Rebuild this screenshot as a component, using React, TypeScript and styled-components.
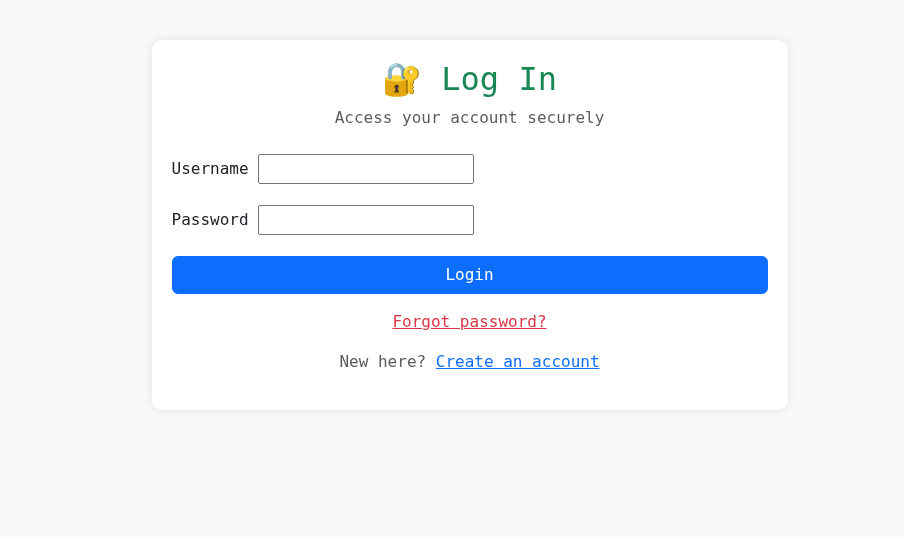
import React from "react";
import styled, { createGlobalStyle } from "styled-components";

const GlobalStyle = createGlobalStyle`
  *, *::before, *::after { box-sizing: border-box; }
  body {
    margin: 0;
    background: #f8f9fa;
    color: #212529;
    font: 400 16px/24px "DejaVu Sans Mono", monospace;
  }
`;

const Page = styled.div`
  min-height: 100vh;
  padding: 40px 0 0 151.5px;
  will-change: transform;
`;

const Card = styled.main`
  width: 636px;
  height: 370px;
  padding: 20px;
  background: #fff;
  border-radius: 10px;
  box-shadow: 0 0 10px rgba(0, 0, 0, 0.1);
`;

const Title = styled.h2`
  margin: 0 0 8px;
  font-size: 32px;
  font-weight: 400;
  line-height: 38.4px;
  color: #198754;
  text-align: center;
`;

const Note = styled.p`
  margin: 0;
  text-align: center;
  color: rgba(33, 37, 41, 0.75);
`;

const Form = styled.form`
  margin: 24px 0 16px;
`;

const Field = styled.div`
  margin-bottom: 21px;
  height: 30px;
`;

const Input = styled.input`
  width: 216px;
  font: inherit;
  margin: 0;
`;

const LoginButton = styled.button`
  display: block;
  width: 100%;
  height: 38px;
  padding: 6px 12px;
  border: 1px solid #0d6efd;
  border-radius: 6px;
  background: #0d6efd;
  color: #fff;
  font: inherit;
`;

const Link = styled.a<{ $tone: string }>`
  color: ${(p) => p.$tone};
  text-decoration: underline;
`;

const Links = styled.div`
  display: grid;
  gap: 16px;
`;

export default function App() {
  return (
    <Page>
      <GlobalStyle />
      <Card>
        <Title>🔐 Log In</Title>
        <Note>Access your account securely</Note>
        <Form>
          <Field>
            <label htmlFor="username">Username</label> <Input id="username" />
          </Field>
          <Field>
            <label htmlFor="password">Password</label> <Input id="password" type="password" />
          </Field>
          <LoginButton type="button">Login</LoginButton>
        </Form>
        <Links>
          <Note>
            <Link href="#" $tone="#dc3545">Forgot password?</Link>
          </Note>
          <Note>
            New here? <Link href="#" $tone="#0d6efd">Create an account</Link>
          </Note>
        </Links>
      </Card>
    </Page>
  );
}
